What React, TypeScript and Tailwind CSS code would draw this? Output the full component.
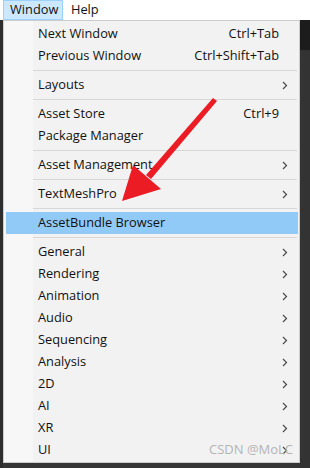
type Item = {
  label: string;
  shortcut?: string;
  sub?: boolean;
  active?: boolean;
};

const groups: Item[][] = [
  [
    { label: "Next Window", shortcut: "Ctrl+Tab" },
    { label: "Previous Window", shortcut: "Ctrl+Shift+Tab" },
  ],
  [{ label: "Layouts", sub: true }],
  [
    { label: "Asset Store", shortcut: "Ctrl+9" },
    { label: "Package Manager" },
  ],
  [{ label: "Asset Management", sub: true }],
  [{ label: "TextMeshPro", sub: true }],
  [{ label: "AssetBundle Browser", active: true }],
  [
    { label: "General", sub: true },
    { label: "Rendering", sub: true },
    { label: "Animation", sub: true },
    { label: "Audio", sub: true },
    { label: "Sequencing", sub: true },
    { label: "Analysis", sub: true },
    { label: "2D", sub: true },
    { label: "AI", sub: true },
    { label: "XR", sub: true },
    { label: "UI", sub: true },
  ],
];

const Chevron = () => (
  <svg width="6" height="9" viewBox="0 0 6 9" className="shrink-0">
    <polyline points="1,1 4.5,4.5 1,8" fill="none" stroke="#4a4a4a" strokeWidth="1.2" />
  </svg>
);

const Row = ({ item }: { item: Item }) => (
  <div
    className={`h-[22px] flex items-center pr-[11px] ${
      item.active ? "bg-[#91c9f7] ml-[2px] mr-[1px] pl-[32px]" : "pl-[34px]"
    }`}
  >
    <span className="mr-auto">{item.label}</span>
    {item.shortcut && <span className="mr-[9px]">{item.shortcut}</span>}
    {item.sub && <Chevron />}
  </div>
);

const App = () => {
  return (
    <div
      className="relative w-[310px] h-[468px] overflow-hidden bg-[#353535] text-[12.8px] text-[#111]"
      style={{ fontFamily: '"Open Sans", "Noto Sans", sans-serif' }}
    >
      {/* menu bar */}
      <div className="h-[20px] bg-white flex items-stretch pl-[3px]">
        <div className="w-[60px] bg-[#cce8ff] border border-[#99d1ff] flex items-center pl-[6px]">
          Window
        </div>
        <div className="flex items-center pl-[8px]">Help</div>
      </div>

      <div className="flex">
        {/* window strip behind the menu */}
        <div className="w-[3px] h-[448px] bg-[#2e2e2e]" />

        {/* dropdown */}
        <div className="w-[297px] h-[443px] border border-[#cccccc] pt-[2px] bg-[linear-gradient(to_right,#f7f7f7_29px,#f2f2f2_29px)]">
          {groups.map((group, gi) => (
            <div key={gi}>
              {gi > 0 && (
                <div className="h-[7px] flex items-center pl-[29px] pr-[2px]">
                  <div className="h-px w-full bg-[#d7d7d7]" />
                </div>
              )}
              {group.map((item) => (
                <Row key={item.label} item={item} />
              ))}
            </div>
          ))}
        </div>

        <div className="flex-1 flex flex-col">
          <div className="h-[30px] bg-[#1c1c1c]" />
          <div className="flex-1 bg-[#333333]" />
        </div>
      </div>

      {/* red annotation arrow */}
      <svg
        className="absolute left-0 top-0 pointer-events-none"
        width="310"
        height="468"
        viewBox="0 0 310 468"
      >
        <polygon points="213,98 217,101 151,179 146,175" fill="#ec1c24" />
        <polygon points="122,201 133,165 161,189" fill="#ec1c24" />
      </svg>

      <div className="absolute left-[209px] top-[440px] text-[13px] text-[#b4b4b4]">
        CSDN @MoLC
      </div>
    </div>
  );
};

export default App;
